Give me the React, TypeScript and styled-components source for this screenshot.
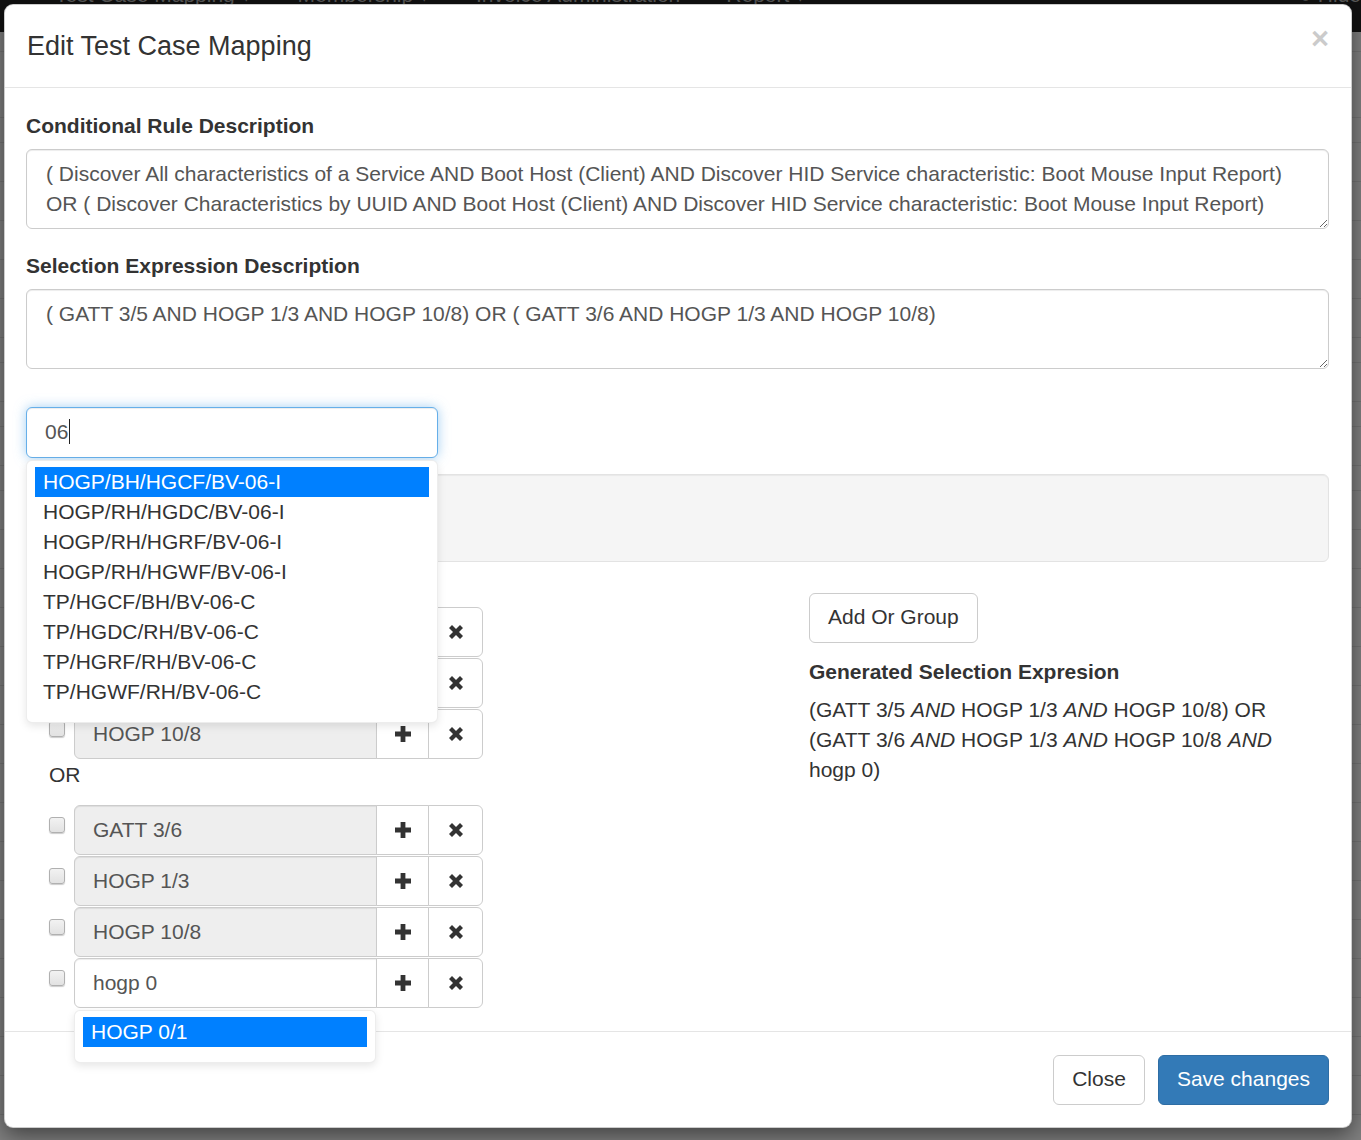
import React from "react";
import styled, { createGlobalStyle } from "styled-components";

const GlobalStyle = createGlobalStyle`
  html, body { margin: 0; padding: 0; }
  body { font-family: "Liberation Sans", Arial, sans-serif; background: #808080; }
  * { box-sizing: border-box; }
`;

const FONT = `"Liberation Sans", Arial, sans-serif`;

const Page = styled.div`
  position: relative;
  width: 1361px;
  height: 1140px;
  overflow: hidden;
  background: #808080;
`;

const NavBar = styled.div`
  height: 32px;
  background: #111;
  display: flex;
  padding-left: 55px;
  gap: 46px;
  overflow: hidden;
`;

const NavText = styled.span<{ $push?: boolean }>`
  margin-top: -20px;
  margin-left: ${(p) => (p.$push ? "auto" : "0")};
  font-size: 21px;
  line-height: 30px;
  color: #5a5a5a;
  white-space: nowrap;
`;

const BackRows = styled.div`
  display: flex;
  flex-direction: column;
`;

const BackRow = styled.div<{ $h: number }>`
  height: ${(p) => p.$h}px;
  border-bottom: 1px solid #747474;
`;

const Modal = styled.div`
  position: absolute;
  top: 4px;
  left: 4px;
  width: 1348px;
  background: #fff;
  border: 1px solid rgba(0, 0, 0, 0.2);
  border-radius: 9px;
  box-shadow: 0 7px 22px rgba(0, 0, 0, 0.5);
  color: #333;
  font-family: ${FONT};
`;

const Header = styled.div`
  display: flex;
  justify-content: space-between;
  align-items: flex-start;
  padding: 22px 22px 22px 22px;
  border-bottom: 1px solid #e5e5e5;
`;

const Title = styled.h4`
  margin: 0;
  font-size: 27px;
  font-weight: 400;
  line-height: 38px;
  color: #333;
`;

const CloseX = styled.button`
  border: 0;
  background: transparent;
  padding: 0;
  margin-top: -4px;
  font-family: ${FONT};
  font-size: 31px;
  font-weight: 700;
  line-height: 1;
  color: #000;
  opacity: 0.2;
`;

const Body = styled.div`
  padding: 23px 22px 23px 21px;
`;

const FormGroup = styled.div<{ $mb: number }>`
  position: relative;
  margin-bottom: ${(p) => p.$mb}px;
`;

const Label = styled.label`
  display: block;
  font-weight: 700;
  font-size: 21px;
  line-height: 30px;
  margin-bottom: 8px;
  color: #333;
`;

const TextArea = styled.textarea`
  display: block;
  width: 100%;
  height: 80px;
  padding: 9px 18px 9px 19px;
  font-family: ${FONT};
  font-size: 21px;
  line-height: 30px;
  color: #555;
  border: 1px solid #ccc;
  border-radius: 6px;
  box-shadow: inset 0 1px 1px rgba(0, 0, 0, 0.075);
  resize: vertical;
  background: #fff;
  overflow: hidden;
  outline: none;
`;

const SearchBox = styled.div`
  width: 412px;
  height: 51px;
  padding: 0 18px 2px;
  border: 1px solid #66afe9;
  border-radius: 6px;
  box-shadow: inset 0 1px 1px rgba(0, 0, 0, 0.075), 0 0 12px rgba(102, 175, 233, 0.6);
  font-size: 21px;
  color: #555;
  display: flex;
  align-items: center;
  background: #fff;
`;

const Caret = styled.span`
  display: inline-block;
  width: 1px;
  height: 25px;
  background: #222;
  margin-left: 1px;
`;

const Menu = styled.ul<{ $width: number }>`
  position: absolute;
  top: calc(100% + 2px);
  left: 0;
  width: ${(p) => p.$width}px;
  margin: 0;
  padding: 6px 8px 15px;
  list-style: none;
  background: #fff;
  border: 1px solid rgba(0, 0, 0, 0.07);
  border-radius: 6px;
  box-shadow: 0 3px 9px rgba(0, 0, 0, 0.1);
  z-index: 10;
`;

const MenuItem = styled.li<{ $active?: boolean }>`
  padding: 0 8px;
  font-size: 21px;
  line-height: 30px;
  white-space: nowrap;
  color: ${(p) => (p.$active ? "#fff" : "#333")};
  background: ${(p) => (p.$active ? "#0080ff" : "transparent")};
`;

const Well = styled.div`
  height: 88px;
  background: #f5f5f5;
  border: 1px solid #e3e3e3;
  border-radius: 6px;
  box-shadow: inset 0 1px 1px rgba(0, 0, 0, 0.05);
  margin-bottom: 31px;
`;

const Columns = styled.div`
  display: grid;
  grid-template-columns: 783px 1fr;
`;

const LeftCol = styled.div`
  padding: 14px 0 0 23px;
`;

const RightCol = styled.div`
  display: flex;
  flex-direction: column;
  align-items: flex-start;
`;

const Group = styled.div`
  display: flex;
  flex-direction: column;
  gap: 1px;
`;

const OrLabel = styled.div`
  font-size: 21px;
  line-height: 30px;
  padding-top: 1px;
  margin-bottom: 15px;
  color: #333;
`;

const Row = styled.div`
  display: flex;
  align-items: flex-start;
  height: 50px;
`;

const CheckBox = styled.span`
  flex: none;
  width: 16px;
  height: 16px;
  margin: 12px 9px 0 0;
  background: linear-gradient(#f2f2f2, #e2e2e2);
  border: 1px solid #b0b0b0;
  border-radius: 3px;
  box-shadow: 0 1px 1px rgba(0, 0, 0, 0.2);
`;

const InputGroup = styled.div`
  display: flex;
`;

const FieldWrap = styled.div`
  position: relative;
`;

const GroupInput = styled.div<{ $readonly?: boolean }>`
  width: 303px;
  height: 50px;
  padding: 0 18px;
  line-height: 48px;
  border: 1px solid #ccc;
  border-radius: 6px 0 0 6px;
  background: ${(p) => (p.$readonly ? "#eee" : "#fff")};
  color: #555;
  font-size: 21px;
  box-shadow: inset 0 1px 1px rgba(0, 0, 0, 0.075);
`;

const IconBtn = styled.button<{ $w: number; $last?: boolean }>`
  width: ${(p) => p.$w}px;
  height: 50px;
  margin-left: -1px;
  padding: 0;
  display: flex;
  align-items: center;
  justify-content: center;
  background: #fff;
  border: 1px solid #ccc;
  border-radius: ${(p) => (p.$last ? "0 6px 6px 0" : "0")};
`;

const Btn = styled.button<{ $primary?: boolean }>`
  font-family: ${FONT};
  font-size: 21px;
  line-height: 30px;
  padding: 8px 18px 10px;
  border-radius: 6px;
  border: 1px solid ${(p) => (p.$primary ? "#2e6da4" : "#ccc")};
  background: ${(p) => (p.$primary ? "#337ab7" : "#fff")};
  color: ${(p) => (p.$primary ? "#fff" : "#333")};
`;

const GenLabel = styled.div`
  margin-top: 14px;
  font-weight: 700;
  font-size: 21px;
  line-height: 30px;
  margin-bottom: 8px;
`;

const Expr = styled.div`
  max-width: 500px;
  font-size: 21px;
  line-height: 30px;
  color: #333;
  em {
    font-style: italic;
  }
`;

const Footer = styled.div`
  display: flex;
  justify-content: flex-end;
  gap: 13px;
  padding: 23px 22px 22px;
  border-top: 1px solid #e5e5e5;
`;

const PlusIcon = () => (
  <svg width="16" height="16" viewBox="0 0 16 16" aria-hidden="true">
    <path d="M5.6 0h4.8v5.6H16v4.8h-5.6V16H5.6v-5.6H0V5.6h5.6z" fill="#333" />
  </svg>
);

const CrossIcon = () => (
  <svg width="14" height="14" viewBox="0 0 14 14" aria-hidden="true">
    <path
      d="M3 0L7 4L11 0L14 3L10 7L14 11L11 14L7 10L3 14L0 11L4 7L0 3Z"
      fill="#333"
    />
  </svg>
);

type Item = { text: string; readonly: boolean; menu?: string[] };

const groups: Item[][] = [
  [
    { text: "GATT 3/5", readonly: true },
    { text: "HOGP 1/3", readonly: true },
    { text: "HOGP 10/8", readonly: true },
  ],
  [
    { text: "GATT 3/6", readonly: true },
    { text: "HOGP 1/3", readonly: true },
    { text: "HOGP 10/8", readonly: true },
    { text: "hogp 0", readonly: false, menu: ["HOGP 0/1"] },
  ],
];

const suggestions = [
  "HOGP/BH/HGCF/BV-06-I",
  "HOGP/RH/HGDC/BV-06-I",
  "HOGP/RH/HGRF/BV-06-I",
  "HOGP/RH/HGWF/BV-06-I",
  "TP/HGCF/BH/BV-06-C",
  "TP/HGDC/RH/BV-06-C",
  "TP/HGRF/RH/BV-06-C",
  "TP/HGWF/RH/BV-06-C",
];

const backRows = [20, 66, 25, 39, 39, 39, 39, 39, 25, 39, 25, 39, 25, 39, 39, 39, 39, 39, 39, 39, 39, 39, 39, 39, 39, 39, 39, 39, 39];

export default function App() {
  return (
    <Page>
      <GlobalStyle />
      <NavBar>
        <NavText>Test Case Mapping ▾</NavText>
        <NavText>Membership ▾</NavText>
        <NavText>Invoice Administration</NavText>
        <NavText>Report ▾</NavText>
        <NavText $push>● Hide</NavText>
      </NavBar>
      <BackRows>
        {backRows.map((h, i) => (
          <BackRow key={i} $h={h} />
        ))}
      </BackRows>

      <Modal>
        <Header>
          <Title>Edit Test Case Mapping</Title>
          <CloseX type="button">×</CloseX>
        </Header>
        <Body>
          <FormGroup $mb={22}>
            <Label>Conditional Rule Description</Label>
            <TextArea
              readOnly
              defaultValue="( Discover All characteristics of a Service AND Boot Host (Client) AND Discover HID Service characteristic: Boot Mouse Input Report) OR ( Discover Characteristics by UUID AND Boot Host (Client) AND Discover HID Service characteristic: Boot Mouse Input Report)"
            />
          </FormGroup>
          <FormGroup $mb={38}>
            <Label>Selection Expression Description</Label>
            <TextArea
              readOnly
              defaultValue="( GATT 3/5 AND HOGP 1/3 AND HOGP 10/8) OR ( GATT 3/6 AND HOGP 1/3 AND HOGP 10/8)"
            />
          </FormGroup>
          <FormGroup $mb={16}>
            <SearchBox>
              06
              <Caret />
            </SearchBox>
            <Menu $width={412}>
              {suggestions.map((s, i) => (
                <MenuItem key={s} $active={i === 0}>
                  {s}
                </MenuItem>
              ))}
            </Menu>
          </FormGroup>
          <Well />
          <Columns>
            <LeftCol>
              {groups.map((g, gi) => (
                <React.Fragment key={gi}>
                  {gi > 0 && <OrLabel>OR</OrLabel>}
                  <Group>
                    {g.map((item, ii) => (
                      <Row key={ii}>
                        <CheckBox />
                        <InputGroup>
                          <FieldWrap>
                            <GroupInput $readonly={item.readonly}>{item.text}</GroupInput>
                            {item.menu && (
                              <Menu $width={302}>
                                {item.menu.map((m, mi) => (
                                  <MenuItem key={m} $active={mi === 0}>
                                    {m}
                                  </MenuItem>
                                ))}
                              </Menu>
                            )}
                          </FieldWrap>
                          <IconBtn type="button" $w={53}>
                            <PlusIcon />
                          </IconBtn>
                          <IconBtn type="button" $w={55} $last>
                            <CrossIcon />
                          </IconBtn>
                        </InputGroup>
                      </Row>
                    ))}
                  </Group>
                </React.Fragment>
              ))}
            </LeftCol>
            <RightCol>
              <Btn type="button">Add Or Group</Btn>
              <GenLabel>Generated Selection Expresion</GenLabel>
              <Expr>
                (GATT 3/5 <em>AND</em> HOGP 1/3 <em>AND</em> HOGP 10/8) OR (GATT 3/6{" "}
                <em>AND</em> HOGP 1/3 <em>AND</em> HOGP 10/8 <em>AND</em> hogp 0)
              </Expr>
            </RightCol>
          </Columns>
        </Body>
        <Footer>
          <Btn type="button">Close</Btn>
          <Btn type="button" $primary>
            Save changes
          </Btn>
        </Footer>
      </Modal>
    </Page>
  );
}
